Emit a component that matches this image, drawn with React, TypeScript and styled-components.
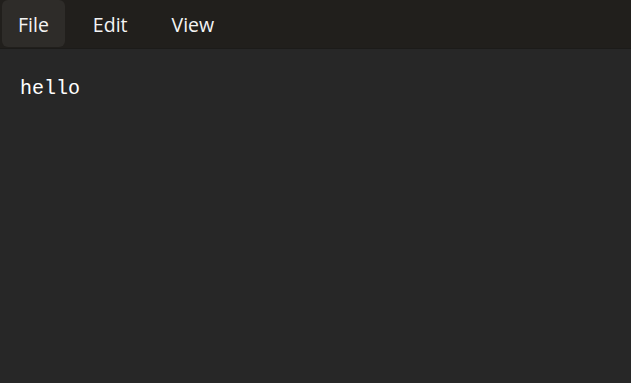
import React from 'react';
import styled, { createGlobalStyle } from 'styled-components';

const GlobalStyle = createGlobalStyle`
  html, body { margin: 0; padding: 0; background: #272727; }
  #root { height: 100vh; }
`;

const Window = styled.div`
  display: flex;
  flex-direction: column;
  height: 100vh;
  background: #272727;
`;

const MenuBar = styled.div`
  display: flex;
  align-items: stretch;
  height: 49px;
  padding: 0 2px 1px;
  background: #211f1c;
  border-bottom: 1px solid #1c1b19;
  box-sizing: border-box;
`;

const MenuItem = styled.div<{ $active?: boolean }>`
  display: flex;
  align-items: center;
  padding: 2px 16px 0;
  margin-right: 12px;
  border-radius: 6px;
  background: ${p => (p.$active ? '#2e2c29' : 'transparent')};
  color: #f4f4f4;
  font-family: 'Open Sans', 'Noto Sans', sans-serif;
  font-size: 19.5px;
`;

const Editor = styled.div`
  flex: 1;
  padding: 28px 20px;
  color: #ffffff;
  font-family: 'Liberation Mono', 'DejaVu Sans Mono', monospace;
  font-size: 20px;
  line-height: 24px;
`;

export default function App(): JSX.Element {
  return (
    <Window>
      <GlobalStyle />
      <MenuBar>
        <MenuItem $active>File</MenuItem>
        <MenuItem>Edit</MenuItem>
        <MenuItem>View</MenuItem>
      </MenuBar>
      <Editor>hello</Editor>
    </Window>
  );
}
